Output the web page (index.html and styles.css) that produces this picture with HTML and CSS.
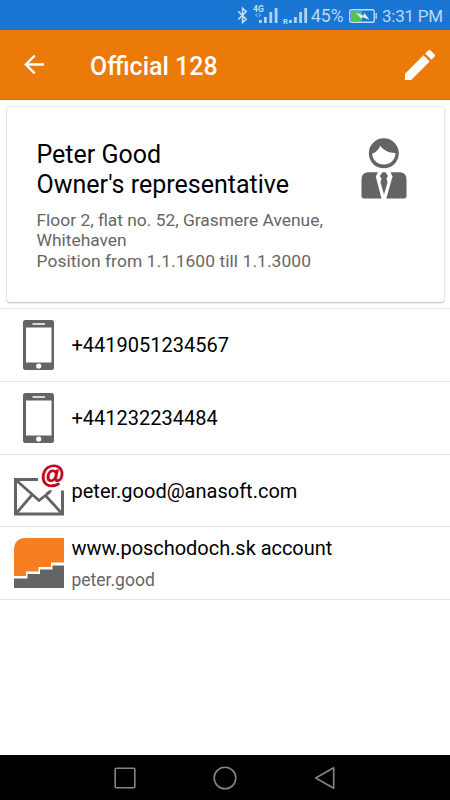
FILE: index.html
```html
<!DOCTYPE html>
<html lang="en">
<head>
<meta charset="utf-8">
<title>Official 128</title>
<link rel="stylesheet" href="styles.css">
</head>
<body>
<div class="status">
  <svg class="signals" width="74" height="30" viewBox="0 0 74 30">
    <path d="M2.200 11.300l8 8-3.600 3.200V8.300l3.600 3.200-8 8" fill="none" stroke="#c3dcf5" stroke-width="1.600"/>
    <text class="net" x="17" y="11.500">4G</text>
    <path d="M18.500 15.300l2.800-2.800v5.600zM25.500 15.300l-2.800-2.800v5.600z" fill="#5b9fe2"/>
    <path d="M23 20h2.800v3H23zM28 17h2.800v6H28zM33.400 12h2.800v11h-2.800zM38.700 8h2.800v15h-2.800zM53 20h2.800v3H53zM58 17h2.800v6H58zM63.200 12h2.800v11h-2.800zM68.300 8h2.800v15h-2.800z" fill="#b3d2f2"/>
    <text class="roam" x="47" y="24">R</text>
  </svg>
  <span class="percent">45%</span>
  <svg class="battery" width="28" height="14" viewBox="0 0 28 14">
    <rect x="2" y="2" width="11" height="10" fill="#4fc35a"/>
    <rect x=".8" y=".8" width="24.400" height="12.400" rx="1.800" fill="none" stroke="#c3dcf5" stroke-width="1.400"/>
    <path d="M27.200 4v6" stroke="#c3dcf5" stroke-width="1.300"/>
    <path d="M6.500 3.500l8 3 .8-2.700 5.200 7-7-2.500-1 1.800z" fill="#dbeaf8"/>
  </svg>
  <span class="clock">3:31 PM</span>
</div>
<header class="bar">
  <svg class="back" width="22" height="22" viewBox="0 0 22 22"><path d="M21 10.500H2.200M11.700 1.600L2.800 10.500l8.900 8.900" fill="none" stroke="#fff" stroke-width="2.300"/></svg>
  <h1>Official 128</h1>
  <svg class="edit" width="30" height="30" viewBox="3 3 18 18"><path fill="#fff" d="M3 17.250V21h3.750L17.810 9.940l-3.750-3.750L3 17.250zM20.710 7.040a1 1 0 0 0 0-1.410l-2.340-2.340a1 1 0 0 0-1.410 0l-1.830 1.830 3.750 3.750 1.830-1.830z"/></svg>
</header>
<main>
  <section class="card">
    <div class="info">
      <h2>Peter Good<br>Owner's representative</h2>
      <p>Floor 2, flat no. 52, Grasmere Avenue,<br>Whitehaven<br><span class="term">Position from 1.1.1600 till 1.1.3000</span></p>
    </div>
    <svg class="person" width="46" height="61" viewBox="0 0 46 61">
      <circle cx="22.800" cy="15.300" r="15" fill="#636466"/>
      <path d="M11.200 15.800C15 14.500 17.500 11.500 19.300 7.800c3 4.700 9 7.300 15.200 7.200 0 6.500-5 11.600-11.700 11.600S11.400 21.500 11.200 15.800z" fill="#fff"/>
      <path d="M7 34.200h32a6.500 6.500 0 0 1 6.500 6.500V58a2.500 2.500 0 0 1-2.500 2.500H3A2.500 2.500 0 0 1 .5 58V40.700A6.500 6.500 0 0 1 7 34.200z" fill="#636466"/>
      <path d="M17 34h12.500l2 4.500L25.200 61h-4.600L14.800 38.500z" fill="#fff"/>
      <path d="M21.500 34.200h3l2.500 3.800-1.500 2.500 1 4-3.500 12-3.500-12 1-4L18.800 38z" fill="#636466"/>
    </svg>
  </section>
  <ul class="contacts">
    <li>
      <svg class="icon" width="50" height="50" viewBox="0 0 50 50"><path fill="#636466" fill-rule="evenodd" d="M11.500 0h26q2.500 0 2.500 2.500v45q0 2.500-2.500 2.500h-26Q9 50 9 47.500v-45Q9 0 11.500 0zM12 7.500v35h25.500v-35z"/><path d="M19 4h11.500" stroke="#fff" stroke-width="1.500" stroke-linecap="round"/><circle cx="24.700" cy="46" r="2.600" fill="#fff"/></svg>
      <span class="label">+4419051234567</span>
    </li>
    <li>
      <svg class="icon" width="50" height="50" viewBox="0 0 50 50"><path fill="#636466" fill-rule="evenodd" d="M11.500 0h26q2.500 0 2.500 2.500v45q0 2.500-2.500 2.500h-26Q9 50 9 47.500v-45Q9 0 11.500 0zM12 7.500v35h25.500v-35z"/><path d="M19 4h11.500" stroke="#fff" stroke-width="1.500" stroke-linecap="round"/><circle cx="24.700" cy="46" r="2.600" fill="#fff"/></svg>
      <span class="label">+441232234484</span>
    </li>
    <li>
      <svg class="icon" width="50" height="50" viewBox="0 0 50 50"><g fill="none" stroke="#636466"><path stroke-width="3" d="M24 14.500H1.500v34.500h47V25.500"/><path stroke-width="2.800" d="M2 15l23 20.500L36.500 26.500M2.500 48L17.500 30.500M47.500 48L31.500 30.500"/></g><path d="M31.500 28l4-2.700h3L34 29.500z" fill="#636466"/><text class="at" x="26.500" y="17.500">@</text></svg>
      <span class="label">peter.good@anasoft.com</span>
    </li>
    <li>
      <svg class="icon" width="50" height="50" viewBox="0 0 50 50"><path fill="#f77f22" d="M12 0h38v24.500H37v4.500H24.500v4.500H12V38H0V12Q0 0 12 0z"/><path fill="#636466" d="M0 50V40.500h13.500V36H26v-4.500h12.500V27.500H50V50z"/></svg>
      <div class="stack"><span class="label site">www.poschodoch.sk account</span><span class="sub">peter.good</span></div>
    </li>
  </ul>
</main>
<nav class="keys">
  <svg width="22" height="22" viewBox="0 0 22 22"><rect x="1.200" y="1.200" width="19.600" height="19.600" rx="1"/></svg>
  <svg width="24" height="24" viewBox="0 0 24 24"><circle cx="12" cy="12" r="10.800"/></svg>
  <svg width="22" height="24" viewBox="0 0 22 24"><path d="M19.700 1.800v20.400L1.700 12z"/></svg>
</nav>
</body>
</html>
```
FILE: styles.css
```css
* { box-sizing: border-box; margin: 0; padding: 0; }
body {
  width: 450px; height: 800px; overflow: hidden;
  display: flex; flex-direction: column;
  background: #fff; color: #000;
  font-family: Roboto, "Liberation Sans", sans-serif;
}
svg { display: block; flex: none; }
.status {
  height: 30px; flex: none; padding-left: 236px;
  display: flex; align-items: center;
  background: #1976d2; color: #bcd8f4;
  font-size: 17.500px; line-height: 30px; white-space: nowrap;
}
.net { font: bold 8.500px Roboto, sans-serif; fill: #c3dcf5; }
.roam { font: bold 7.500px Roboto, sans-serif; fill: #c3dcf5; }
.percent { width: 39px; padding: 1px 0 0 1px; }
.battery { margin-top: 1px; }
.clock { margin-left: 5px; padding-top: 1px; font-size: 17px; letter-spacing: -.250px; }
.bar {
  height: 70px; flex: none; padding: 0 15px 0 23px;
  display: flex; align-items: center;
  background: #ec7a08; border-bottom: 1px solid #e8650a; color: #fff;
}
.bar h1 { margin-left: 45px; padding-top: 4px; font-size: 25px; font-weight: 500; line-height: 30px; }
.edit { margin-left: auto; }
main { flex: 1; }
.card {
  height: 195px; margin: 6.500px 6px 0 6.500px; padding: 33px 37px 0 30px;
  display: flex; justify-content: space-between; align-items: flex-start;
  border-radius: 3px;
  box-shadow: 0 0 2px rgba(0,0,0,.22), 0 1px 2px rgba(0,0,0,.22);
}
.card h2 { font-size: 25px; font-weight: 400; line-height: 30px; }
.card p { margin-top: 10px; font-size: 17.400px; line-height: 20.500px; color: #666; }
.term { letter-spacing: .080px; }
.info { white-space: nowrap; }
.person { margin-top: -2px; }
.contacts { margin-top: 6.500px; border-top: 1px solid #e4e4e4; list-style: none; }
.contacts li {
  height: 72.800px; padding-left: 14px; border-bottom: 1px solid #e4e4e4;
  display: flex; align-items: center; gap: 7.500px;
}
.icon { overflow: visible; }
.label { font-size: 20px; line-height: 24px; }
.contacts li > .label { padding-top: 1px; }
.site { letter-spacing: -.040px; }
.stack { display: flex; flex-direction: column; gap: 10px; padding-top: 1px; }
.sub { font-size: 17.500px; line-height: 21px; color: #666; }
.at { font: italic bold 24px "Liberation Sans", sans-serif; fill: #c00020; stroke: #c00020; stroke-width: .900px; }
.keys {
  height: 45px; flex: none; padding: 0 114px;
  display: flex; align-items: center; justify-content: space-between;
  background: #000;
}
.keys svg { fill: none; stroke: #858585; stroke-width: 1.600; stroke-linejoin: round; }
```
